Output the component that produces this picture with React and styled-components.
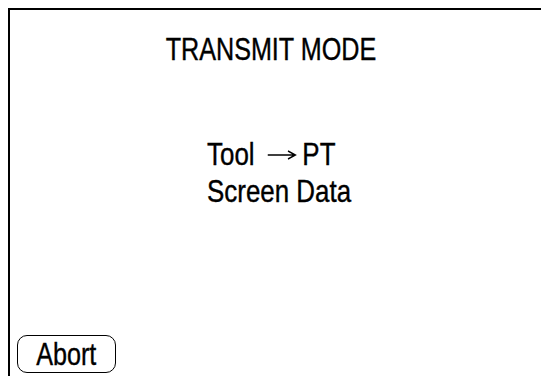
import React from 'react';
import styled, { createGlobalStyle } from 'styled-components';

const Global = createGlobalStyle`
  html, body {
    margin: 0;
    padding: 0;
    background: #fff;
    overflow: hidden;
  }
  body {
    font-family: "Liberation Sans", Arial, sans-serif;
    color: #000;
  }
`;

// the panel runs off the right and bottom edges of the window
const Screen = styled.div`
  margin: 8px 0 0 8px;
  width: calc(100vw - 8px);
  height: calc(100vh - 8px);
  border-top: 2px solid #000;
  border-left: 2px solid #000;
  box-sizing: border-box;
  display: flex;
  flex-direction: column;
`;

// no narrow face installed, so squeeze the regular one
const Condensed = styled.span`
  display: inline-block;
  transform: scaleX(${(p) => p.$scale || 0.786});
  transform-origin: ${(p) => p.$origin || 'center'};
  white-space: nowrap;
  -webkit-text-stroke: 0.4px #000;
`;

const Title = styled.h1`
  margin: 0;
  padding-top: 23px;
  width: 521px;
  font-size: 32px;
  font-weight: normal;
  line-height: 32px;
  text-align: center;
`;

const Message = styled.div`
  margin-top: 71px;
  padding-left: 197px;
  font-size: 32px;
  line-height: 37px;
`;

const Line = styled.div`
  display: block;
`;

const Arrow = styled.svg`
  width: 35px;
  height: 10px;
  margin: 0 8px 0 16px;
  vertical-align: 5px;
  overflow: visible;
`;

const Footer = styled.div`
  margin-top: 125px;
  padding-left: 7px;
`;

const Button = styled.button`
  width: 99px;
  height: 38px;
  padding: 0;
  border: 1px solid #000;
  border-radius: 10px;
  background: #fff;
  color: #000;
  font-family: inherit;
  font-size: 32px;
  line-height: 36px;
`;

export default function App() {
  return (
    <>
      <Global />
      <Screen>
        <Title>
          <Condensed>TRANSMIT MODE</Condensed>
        </Title>
        <Message>
          <Condensed $origin="left" $scale={0.81}>
            <Line>
              Tool
              <Arrow viewBox="0 0 35 10">
                <path d="M0 5H34M25 1L34 5L25 9" fill="none" stroke="#000" strokeWidth="1.6" />
              </Arrow>
              PT
            </Line>
            <Line>Screen Data</Line>
          </Condensed>
        </Message>
        <Footer>
          <Button>
            <Condensed>Abort</Condensed>
          </Button>
        </Footer>
      </Screen>
    </>
  );
}
